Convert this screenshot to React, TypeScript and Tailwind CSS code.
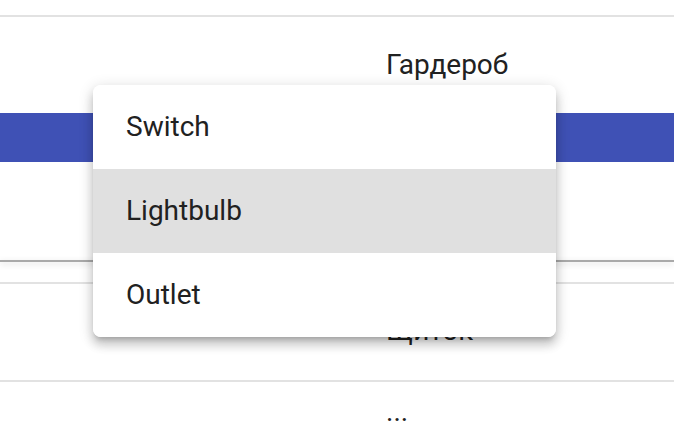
import React from "react";

export default function App() {
  const items = ["Switch", "Lightbulb", "Outlet"];
  return (
    <div
      className="relative w-[674px] h-[422px] overflow-hidden bg-white text-[#212121]"
      style={{ fontFamily: "Roboto, 'Liberation Sans', sans-serif" }}
    >
      <div className="flex flex-col">
        <div className="h-[15px]" />
        <div className="h-[2px] bg-[#e2e2e2]" />
        <div className="h-[96px] pt-[32px] pl-[386px] text-[28px] leading-[32px]">Гардероб</div>
        <div className="h-[49px] bg-[#3f51b5]" />
        <div className="h-[98px]" />
        <div className="h-[2px] bg-[#a9a9a9] shadow-[0_2px_6px_rgba(0,0,0,0.18)]" />
        <div className="h-[20px]" />
        <div className="h-[2px] bg-[#e2e2e2]" />
        <div className="h-[96px] pt-[31px] pl-[386px] text-[28px] leading-[32px]">Щиток</div>
        <div className="h-[2px] bg-[#e2e2e2]" />
        <div className="pt-[14px] pl-[386px] text-[28px] leading-[32px]">...</div>
      </div>

      <div className="absolute left-[93px] top-[85px] w-[463px] rounded-[8px] bg-white overflow-hidden shadow-[0_5px_5px_-3px_rgba(0,0,0,0.2),0_8px_10px_1px_rgba(0,0,0,0.14),0_3px_14px_2px_rgba(0,0,0,0.12)]">
        {items.map((it) => (
          <div
            key={it}
            className={
              "h-[84px] flex items-center pl-[33px] text-[28px] leading-[32px] text-[#212121] " +
              (it === "Lightbulb" ? "bg-[#e0e0e0]" : "bg-white")
            }
          >
            {it}
          </div>
        ))}
      </div>
    </div>
  );
}
